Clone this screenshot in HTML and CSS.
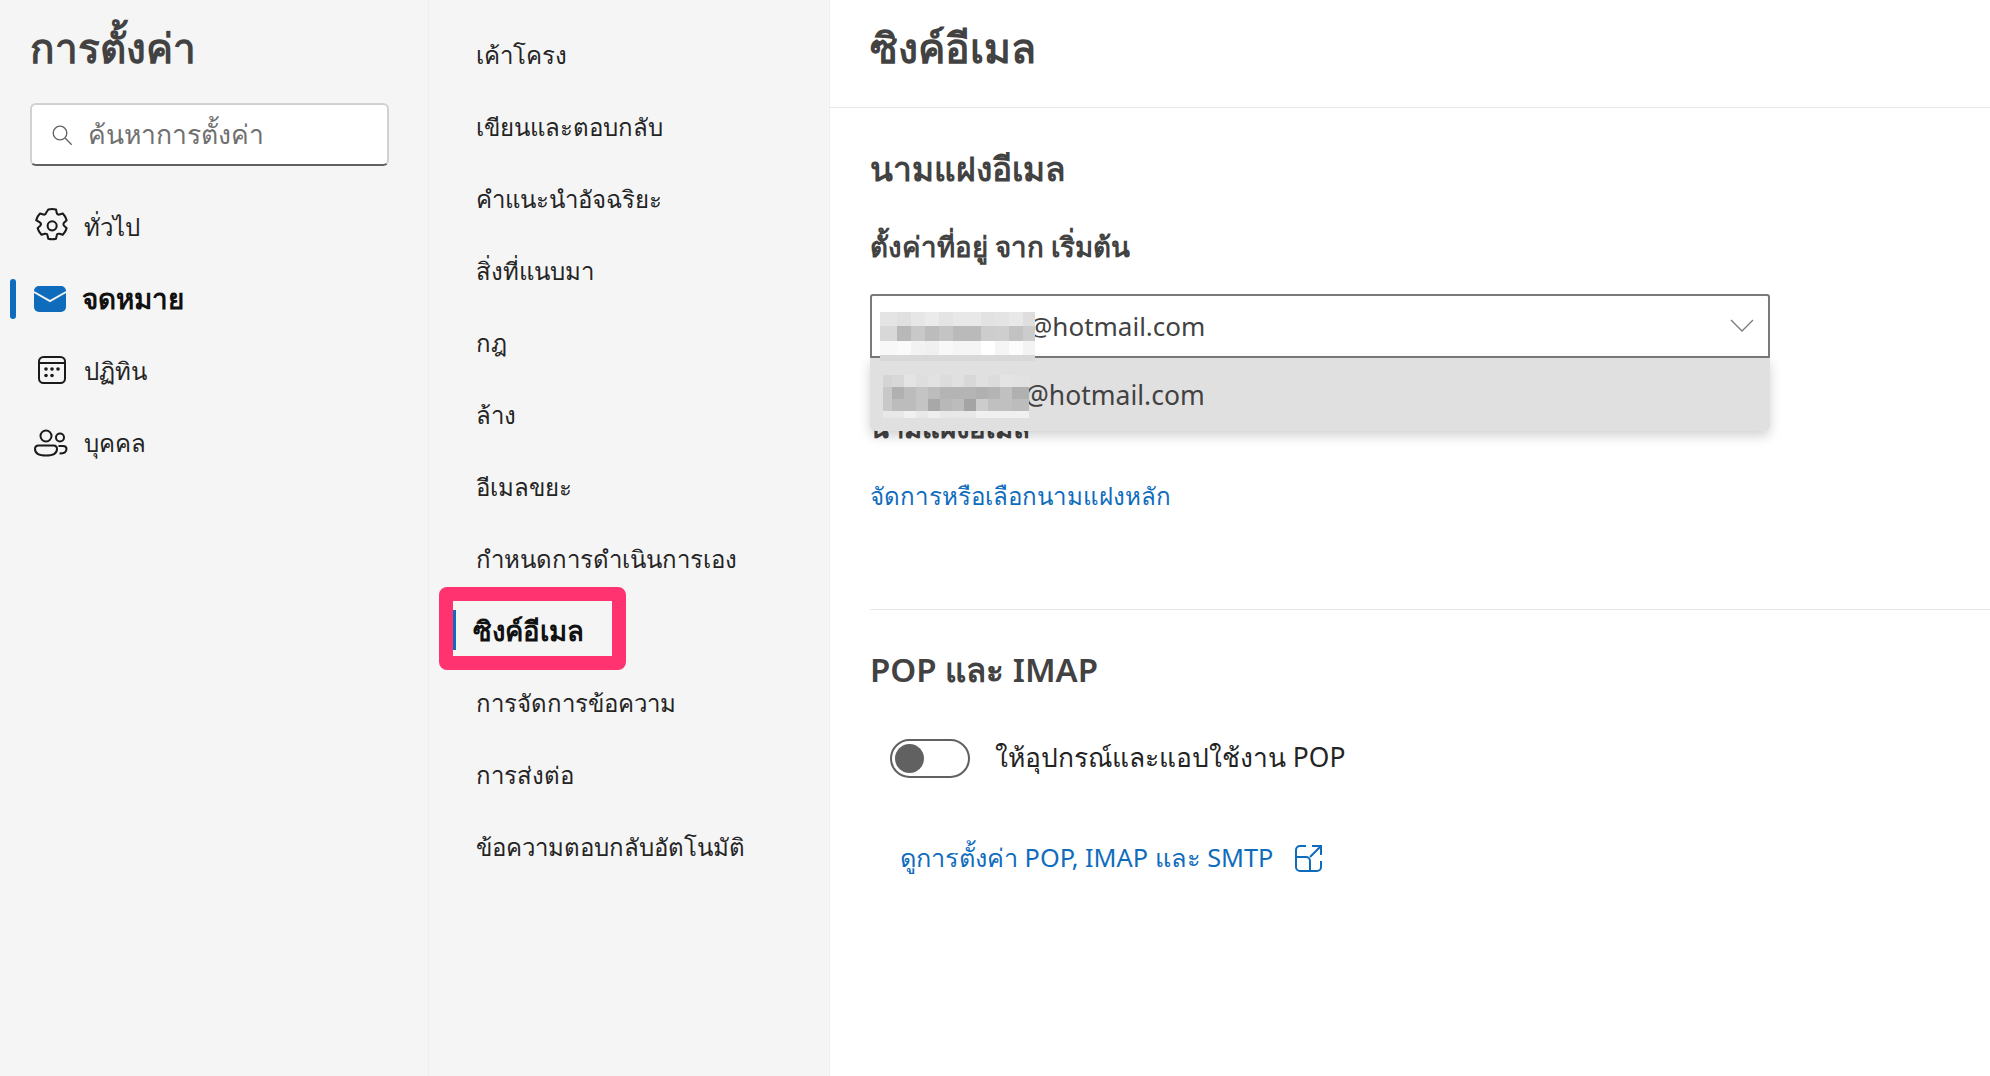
FILE: index.html
```html
<!DOCTYPE html>
<html lang="th">
<head>
    <meta charset="UTF-8">
    <meta name="viewport" content="width=device-width, initial-scale=1.0">
    <title>การตั้งค่า</title>
    <link rel="stylesheet" href="styles.css">
</head>
<body>
    <div class="settings">
        <aside class="side">
            <h1>การตั้งค่า</h1>
            <div class="search">
                <svg class="search-icon" viewBox="0 0 20 20" fill="none" stroke="#616161" stroke-width="1.2"><circle cx="8.2" cy="8.2" r="6.2"/><path d="M12.8 12.8l6 6"/></svg>
                <span>ค้นหาการตั้งค่า</span>
            </div>
            <nav class="side-nav">
                <a class="side-item">
                    <svg viewBox="1 3 30 30" fill="none" stroke="#1a1a1a" stroke-width="1.800" stroke-linejoin="round"><path d="M13.6 2.6c2.2-.6 4.600-.6 6.800 0l.7 3.100c.2 1 1.300 1.600 2.300 1.300l3-.9c1.600 1.600 2.800 3.700 3.400 5.900l-2.300 2.200c-.7.700-.7 1.900 0 2.600l2.300 2.200c-.6 2.200-1.800 4.300-3.400 5.900l-3-.9c-1-.3-2.100.3-2.300 1.300l-.7 3.100c-2.200.6-4.600.6-6.800 0l-.7-3.100c-.2-1-1.300-1.600-2.300-1.300l-3 .9c-1.600-1.600-2.800-3.700-3.400-5.900l2.300-2.200c.7-.7.7-1.900 0-2.600L2.900 12c.6-2.200 1.800-4.300 3.400-5.900l3 .9c1 .3 2.100-.3 2.300-1.300z"/><circle cx="17" cy="17" r="4"/></svg>
                    <span>ทั่วไป</span>
                </a>
                <a class="side-item active">
                    <svg viewBox="0 0 34 28" fill="none"><rect y="1" width="32" height="26" rx="5" fill="#0f6cbd"/><path d="M0 7l16 9L32 7" stroke="#f5f5f5" stroke-width="2"/></svg>
                    <span>จดหมาย</span>
                </a>
                <a class="side-item">
                    <svg viewBox="0 0 34 34" fill="none" stroke="#1a1a1a" stroke-width="2"><rect x="5" y="3" width="26" height="26" rx="4.500"/><path d="M5 9h26"/><g fill="#1a1a1a" stroke="none"><circle cx="12" cy="15" r="1.800"/><circle cx="18" cy="15" r="1.800"/><circle cx="24" cy="15" r="1.800"/><circle cx="12" cy="21.500" r="1.800"/><circle cx="18" cy="21.500" r="1.800"/></g></svg>
                    <span>ปฏิทิน</span>
                </a>
                <a class="side-item">
                    <svg viewBox="0 0 34 28" fill="none" stroke="#1a1a1a" stroke-width="2"><circle cx="12" cy="7" r="5.500"/><path d="M1 20c0-2 1.500-3.500 3.500-3.500h15c2 0 3.500 1.500 3.500 3.500 0 4.500-5 6.500-11 6.500S1 24.500 1 20z"/><circle cx="26" cy="8.500" r="4"/><path d="M24.500 17h4.500c2 0 3.500 1.300 3.500 3 0 3-3 4.500-7 4.500"/></svg>
                    <span>บุคคล</span>
                </a>
            </nav>
        </aside>

        <nav class="sub-nav">
            <a class="sub-item">เค้าโครง</a>
            <a class="sub-item">เขียนและตอบกลับ</a>
            <a class="sub-item">คำแนะนำอัจฉริยะ</a>
            <a class="sub-item">สิ่งที่แนบมา</a>
            <a class="sub-item">กฎ</a>
            <a class="sub-item">ล้าง</a>
            <a class="sub-item">อีเมลขยะ</a>
            <a class="sub-item">กำหนดการดำเนินการเอง</a>
            <a class="sub-item active">ซิงค์อีเมล<i class="callout"></i></a>
            <a class="sub-item">การจัดการข้อความ</a>
            <a class="sub-item">การส่งต่อ</a>
            <a class="sub-item">ข้อความตอบกลับอัตโนมัติ</a>
        </nav>

        <main class="content">
            <h2 class="page-title">ซิงค์อีเมล</h2>
            <div class="panel">
                <section class="alias">
                    <h3>นามแฝงอีเมล</h3>
                    <label>ตั้งค่าที่อยู่ จาก เริ่มต้น</label>
                    <div class="dropdown">
                        <div class="select">
                            <span>@hotmail.com</span>
                            <svg viewBox="0 0 24 14" fill="none" stroke="#7a7a7a" stroke-width="1.300"><path d="M1 1l11 11L23 1"/></svg>
                        </div>
                        <div class="menu">
                            <span>@hotmail.com</span>
                            <div class="blur blur-menu"></div>
                        </div>
                        <div class="blur blur-top"></div>
                    </div>
                    <h4>นามแฝงอีเมล</h4>
                    <a class="link">จัดการหรือเลือกนามแฝงหลัก</a>
                </section>
                <section class="pop">
                    <h3>POP และ IMAP</h3>
                    <div class="toggle-row">
                        <span class="toggle"></span>
                        <span>ให้อุปกรณ์และแอปใช้งาน POP</span>
                    </div>
                    <a class="link pop-link">ดูการตั้งค่า POP, IMAP และ SMTP
                        <svg viewBox="0 0 28 28" fill="none" stroke="#0f6cbd" stroke-width="2"><path d="M11 2H5a4 4 0 0 0-4 4v17a4 4 0 0 0 4 4h17a4 4 0 0 0 4-4v-6M1 13h10a4 4 0 0 1 4 4v10M17 2h9v9M26 2L15 13"/></svg>
                    </a>
                </section>
            </div>
        </main>
    </div>
</body>
</html>
```

FILE: styles.css
```css
* {
    box-sizing: border-box;
}
html, body {
    height: 100%;
}
body {
    margin: 0;
    background: #fff;
    color: #242424;
    font-family: "Noto Sans", "Open Sans", sans-serif;
    font-size: 24px;
    overflow: hidden;
}
.settings {
    display: flex;
    height: 100%;
}
.side {
    width: 429px;
    flex: none;
    padding: 0 0 0 30px;
    background: #f5f5f5;
    border-right: 1px solid #eee;
}
.side h1 {
    margin: 0;
    height: 103px;
    padding-top: 20px;
    font-size: 40.500px;
    line-height: 56px;
    font-weight: 600;
    color: #424242;
}
.search {
    width: 359px;
    height: 63px;
    display: flex;
    align-items: center;
    gap: 15px;
    padding-left: 19px;
    background: #fff;
    border: 2px solid #d1d1d1;
    border-bottom-color: #616161;
    border-radius: 6px;
    color: #707070;
    font-size: 26.500px;
}
.search-icon {
    width: 22px;
    height: 22px;
}
.side-nav {
    margin-top: 25px;
}
.side-item {
    position: relative;
    display: flex;
    align-items: center;
    height: 72px;
    gap: 16px;
    padding-left: 4px;
}
.side-item svg {
    width: 34px;
    height: 34px;
    overflow: visible;
}
.side-item.active {
    font-weight: 700;
    font-size: 27.800px;
    color: #111;
    gap: 14px;
}
.side-item.active::before {
    content: "";
    position: absolute;
    left: -20px;
    top: 16px;
    width: 6px;
    height: 40px;
    border-radius: 3px;
    background: #0f6cbd;
}
.sub-nav {
    width: 401px;
    flex: none;
    padding: 19px 0 0 47px;
    background: #f5f5f5;
    border-right: 1px solid #eee;
}
.sub-item {
    position: relative;
    display: flex;
    align-items: center;
    height: 72px;
}
.sub-item.active {
    font-weight: 700;
    font-size: 27.500px;
    color: #111;
    margin-left: -3px;
}
.sub-item.active::before {
    content: "";
    position: absolute;
    left: -20px;
    top: 15px;
    width: 3px;
    height: 40px;
    background: #0f6cbd;
}
.callout {
    position: absolute;
    left: -34px;
    top: -8px;
    width: 187px;
    height: 83px;
    border: 14px solid #ff3370;
    border-radius: 8px;
}
.content {
    flex: 1;
    min-width: 0;
}
.page-title {
    margin: 0;
    height: 108px;
    padding: 19px 0 0 40px;
    border-bottom: 1px solid #e8e8e8;
    font-size: 41px;
    line-height: 56px;
    font-weight: 600;
    color: #424242;
}
.panel {
    padding-left: 40px;
}
.alias {
    height: 502px;
    border-bottom: 1px solid #e8e8e8;
}
.alias h3, .pop h3 {
    margin: 0;
    color: #424242;
    font-weight: 600;
}
.alias h3 {
    padding-top: 38px;
    font-size: 33.500px;
    line-height: 44px;
}
.alias label {
    display: block;
    margin-top: 39px;
    font-size: 27.700px;
    font-weight: 600;
    line-height: 34px;
    color: #424242;
}
.dropdown {
    position: relative;
    width: 900px;
    margin-top: 31px;
}
.select {
    height: 64px;
    display: flex;
    align-items: center;
    justify-content: space-between;
    padding: 0 14px 0 157px;
    border: 2px solid #7a7a7a;
    border-radius: 3px 3px 0 0;
    color: #424242;
    font-size: 26px;
}
.select svg {
    width: 24px;
    height: 14px;
}
.menu {
    position: absolute;
    z-index: 2;
    left: 0;
    right: 0;
    top: 64px;
    height: 73px;
    display: flex;
    align-items: center;
    padding-left: 155px;
    background: #e0e0e0;
    border-radius: 0 0 6px 6px;
    box-shadow: 0 5px 12px rgba(0, 0, 0, 0.18);
    color: #424242;
    font-size: 26.500px;
}
.blur {
    position: absolute;
    background-repeat: no-repeat;
}
/* pixelated redaction over the address, one gradient per row */
.blur-top {
    z-index: 3;
    left: 10px;
    top: 18px;
    width: 155px;
    height: 49px;
    background-image:
        linear-gradient(90deg, #e4e4e4 0 17px, #e0e0e0 17px 31px, #e6e6e6 31px 45px, #ebebeb 45px 59px, #e4e4e4 59px 73px, #e8e8e8 73px 101px, #e2e2e2 101px 115px, #e4e4e4 115px 129px, #e8e8e8 129px 143px, #dedede 143px),
        linear-gradient(90deg, #d8d8d8 0 17px, #b8b8b8 17px 31px, #c8c8c8 31px 45px, #bcbcbc 45px 59px, #c4c4c4 59px 73px, #bababa 73px 101px, #cdcdcd 101px 115px, #cecece 115px 129px, #c2c2c2 129px 143px, #cccccc 143px),
        linear-gradient(90deg, #f8f8f8 0 17px, #fafafa 17px 31px, #f2f2f2 31px 45px, #f0f0f0 45px 59px, #f8f8f8 59px 73px, #f5f5f5 73px 101px, #ffffff 101px 115px, #f5f5f5 115px 129px, #fcfcfc 129px 143px, #f3f3f3 143px),
        linear-gradient(#d8d8d8, #d8d8d8);
    background-size: 100% 14px, 100% 15px, 100% 14px, 100% 6px;
    background-position: 0 0, 0 14px, 0 29px, 0 43px;
}
.blur-menu {
    left: 13px;
    top: 17px;
    width: 146px;
    height: 43px;
    background-image:
        linear-gradient(90deg, #d4d4d4 0 9px, #d8d8d8 9px 21px, #e4e4e4 21px 33px, #dedede 33px 45px, #e2e2e2 45px 57px, #dcdcdc 57px 69px, #e0e0e0 69px 81px, #d8d8d8 81px 93px, #e0e0e0 93px 105px, #dcdcdc 105px 117px, #e4e4e4 117px 129px, #e2e2e2 129px),
        linear-gradient(90deg, #c8c8c8 0 9px, #b0b0b0 9px 21px, #bcbcbc 21px 33px, #c4c4c4 33px 45px, #bcbcbc 45px 57px, #b4b4b4 57px 93px, #b0b0b0 93px 105px, #b4b4b4 105px 117px, #c0c0c0 117px 129px, #b0b0b0 129px),
        linear-gradient(90deg, #c8c8c8 0 9px, #bcbcbc 9px 33px, #c4c4c4 33px 45px, #a8a8a8 45px 57px, #b8b8b8 57px 69px, #bcbcbc 69px 81px, #a4a4a4 81px 93px, #cccccc 93px 105px, #c0c0c0 105px 129px, #bcbcbc 129px),
        linear-gradient(90deg, #e8e8e8 0 21px, #f0f0f0 21px 33px, #e8e8e8 33px 45px, #eeeeee 45px 57px, #e8e8e8 57px 93px, #f0f0f0 93px);
    background-size: 100% 12px, 100% 12px, 100% 12px, 100% 7px;
    background-position: 0 0, 0 12px, 0 24px, 0 36px;
}
.alias h4 {
    margin: 53px 0 0;
    font-size: 27.500px;
    line-height: 34px;
    font-weight: 600;
    color: #424242;
}
.link {
    color: #0f6cbd;
}
.alias .link {
    display: block;
    margin-top: 32px;
    font-size: 24.100px;
}
.pop {
    padding-top: 38px;
}
.pop h3 {
    font-size: 33px;
    line-height: 44px;
}
.toggle-row {
    display: flex;
    align-items: center;
    gap: 25px;
    margin: 45px 0 0 20px;
    font-size: 26.400px;
}
.toggle {
    position: relative;
    width: 80px;
    height: 39px;
    border: 2px solid #616161;
    border-radius: 20px;
}
.toggle::after {
    content: "";
    position: absolute;
    left: 3px;
    top: 3px;
    width: 29px;
    height: 29px;
    border-radius: 50%;
    background: #616161;
}
.pop-link {
    display: flex;
    align-items: center;
    gap: 22px;
    margin: 59px 0 0 30px;
    font-size: 25.300px;
}
.pop-link svg {
    width: 28px;
    height: 28px;
}
```
